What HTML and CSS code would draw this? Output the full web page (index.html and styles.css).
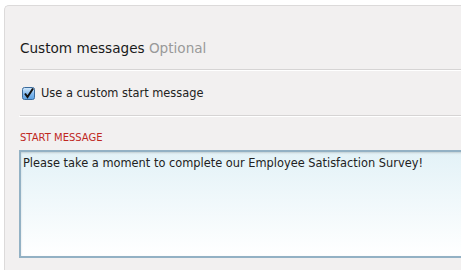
FILE: index.html
```html
<!DOCTYPE html>
<html>
    <head>
        <link rel="stylesheet" href="styles.css">
    </head>
    <body>
        <div class="panel">
            <div class="head">
                <h2>Custom messages <span class="opt">Optional</span></h2>
            </div>
            <div class="row">
                <label class="check">
                    <svg class="box" width="13" height="13" viewBox="0 0 13 13">
                        <defs>
                            <linearGradient id="bg" x1="0" y1="0" x2="0" y2="1">
                                <stop offset="0" stop-color="#d6ebfc"/>
                                <stop offset="0.5" stop-color="#86bbee"/>
                                <stop offset="1" stop-color="#5aa0e4"/>
                            </linearGradient>
                        </defs>
                        <rect x="0.5" y="0.5" width="12" height="12" rx="2" fill="url(#bg)" stroke="#3a6a9c"/>
                        <path d="M3 6.5 L5.5 10 L11 1.5" fill="none" stroke="#111" stroke-width="2"/>
                    </svg>
                    Use a custom start message
                </label>
            </div>
            <div class="msg">
                <div class="caption">Start message</div>
                <textarea class="field">Please take a moment to complete our Employee Satisfaction Survey!</textarea>
            </div>
        </div>
    </body>
</html>
```

FILE: styles.css
```css
html, body{
    overflow:hidden;
}
body{
    margin:0;
    background:#fff;
    font-family:"DejaVu Sans", Verdana, sans-serif;
    color:#222;
}
.panel{
    margin:5px 0 0 4px;
    height:265px;
    box-sizing:border-box;
    overflow:hidden;
    background:#f2f0f0;
    border:1px solid #dcdada;
    border-right:none;
    border-bottom:none;
    border-top-left-radius:5px;
}
.head{
    margin-left:15px;
    padding:32px 0 11px;
    border-bottom:1px solid #d6d4d4;
}
.head h2{
    margin:0;
    font-size:13.6px;
    line-height:20px;
    font-weight:normal;
    color:#1a1a1a;
}
.opt{
    color:#999;
}
.row{
    margin-left:15px;
    height:44px;
    border-top:1px solid #fff;
    border-bottom:1px solid #d6d4d4;
    display:flex;
    align-items:center;
}
.check{
    display:flex;
    align-items:center;
    gap:6px;
    margin-left:2px;
    font-size:11.4px;
    color:#222;
}
.msg{
    margin-left:14px;
    border-top:1px solid #fff;
    padding-top:14px;
}
.caption{
    margin-left:1px;
    font-size:10px;
    line-height:14px;
    text-transform:uppercase;
    color:#c0281f;
}
.field{
    display:block;
    margin-top:5px;
    width:470px;
    height:108px;
    box-sizing:border-box;
    padding:3px 2px;
    border:2px solid #93b1c4;
    box-shadow:inset 0 1px 2px rgba(0,0,0,0.15);
    background:linear-gradient(#e3f2f7, #ffffff);
    font-family:"DejaVu Sans", Verdana, sans-serif;
    font-size:11.4px;
    line-height:16px;
    color:#222;
    resize:none;
    outline:none;
}
```
